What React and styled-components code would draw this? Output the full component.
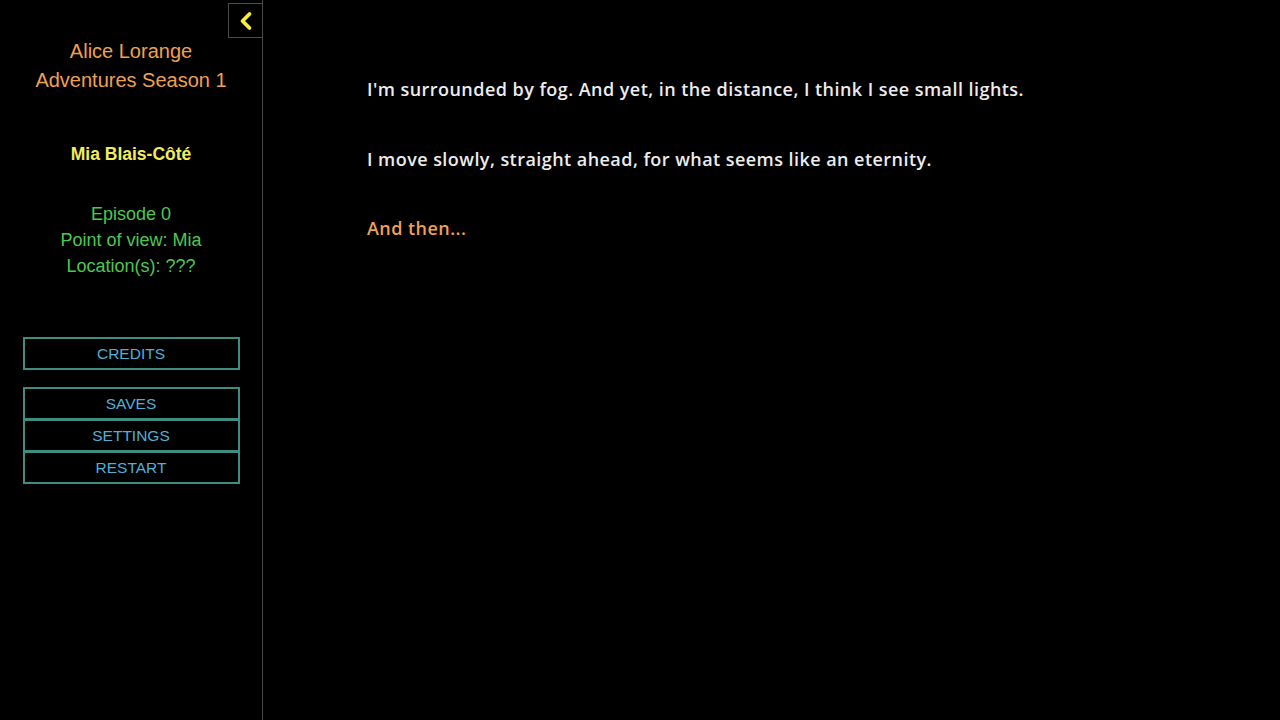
import React from "react";
import styled, { createGlobalStyle } from "styled-components";

const GlobalStyle = createGlobalStyle`
  html, body {
    margin: 0;
    padding: 0;
    background: #000;
  }
  #root {
    height: 100vh;
  }
`;

export default function App() {
  return (
    <>
      <GlobalStyle />
      <Page>
        <Sidebar>
          <ToggleButton aria-label="Hide sidebar">
            <svg width="18" height="20" viewBox="0 0 18 20">
              <path
                d="M12.5 3 L5.5 10 L12.5 17"
                fill="none"
                stroke="#f5ee3a"
                strokeWidth="3.8"
                strokeLinecap="round"
                strokeLinejoin="round"
              />
            </svg>
          </ToggleButton>
          <StoryTitle>
            Alice Lorange
            <br />
            Adventures Season 1
          </StoryTitle>
          <Author>Mia Blais-Côté</Author>
          <Info>
            Episode 0
            <br />
            Point of view: Mia
            <br />
            Location(s): ???
          </Info>
          <Menu>
            <MenuButton>CREDITS</MenuButton>
          </Menu>
          <Menu>
            <MenuButton>SAVES</MenuButton>
            <MenuButton>SETTINGS</MenuButton>
            <MenuButton>RESTART</MenuButton>
          </Menu>
        </Sidebar>
        <Story>
          <Paragraph>
            I'm surrounded by fog. And yet, in the distance, I think I see small
            lights.
          </Paragraph>
          <Paragraph>
            I move slowly, straight ahead, for what seems like an eternity.
          </Paragraph>
          <Paragraph $accent>And then...</Paragraph>
        </Story>
      </Page>
    </>
  );
}

const Page = styled.div`
  display: flex;
  height: 100%;
  background: #000;
`;

const Sidebar = styled.aside`
  position: relative;
  width: 263px;
  flex-shrink: 0;
  border-right: 1px solid #4a4a4a;
  display: flex;
  flex-direction: column;
  align-items: center;
  padding-top: 37px;
  box-sizing: border-box;
  font-family: "Liberation Sans", Arial, sans-serif;
  text-align: center;
`;

const ToggleButton = styled.button`
  position: absolute;
  top: 3px;
  right: -1px;
  width: 35px;
  height: 35px;
  padding: 0;
  display: flex;
  align-items: center;
  justify-content: center;
  background: #000;
  border: 1px solid #4a4a4a;
  cursor: pointer;
`;

const StoryTitle = styled.h1`
  margin: 0;
  font-size: 20px;
  font-weight: 400;
  line-height: 29px;
  color: #f0a050;
`;

const Author = styled.h2`
  margin: 46px 0 0;
  font-size: 17.5px;
  font-weight: 700;
  line-height: 26px;
  color: #f2ee5a;
`;

const Info = styled.p`
  margin: 34px 0 0;
  font-size: 18px;
  line-height: 26px;
  color: #4cc850;
`;

const Menu = styled.nav`
  width: 217px;
  margin-top: 17px;
  display: flex;
  flex-direction: column;

  &:first-of-type {
    margin-top: 58px;
  }
`;

const MenuButton = styled.button`
  height: 33px;
  margin-top: -1px;
  padding: 0;
  background: #000;
  border: 2px solid #3f8c80;
  color: #4fb0d8;
  font-family: "Liberation Sans", Arial, sans-serif;
  font-size: 15.5px;
  cursor: pointer;

  &:first-child {
    margin-top: 0;
  }
`;

const Story = styled.main`
  flex: 1;
  padding: 77px 0 0 104px;
  font-family: "Open Sans", "Noto Sans", sans-serif;
`;

const Paragraph = styled.p`
  margin: 0 0 45.5px;
  font-size: 18px;
  line-height: 24px;
  font-weight: 600;
  letter-spacing: 0.45px;
  color: ${(p) => (p.$accent ? "#f0a050" : "#ececec")};
`;
